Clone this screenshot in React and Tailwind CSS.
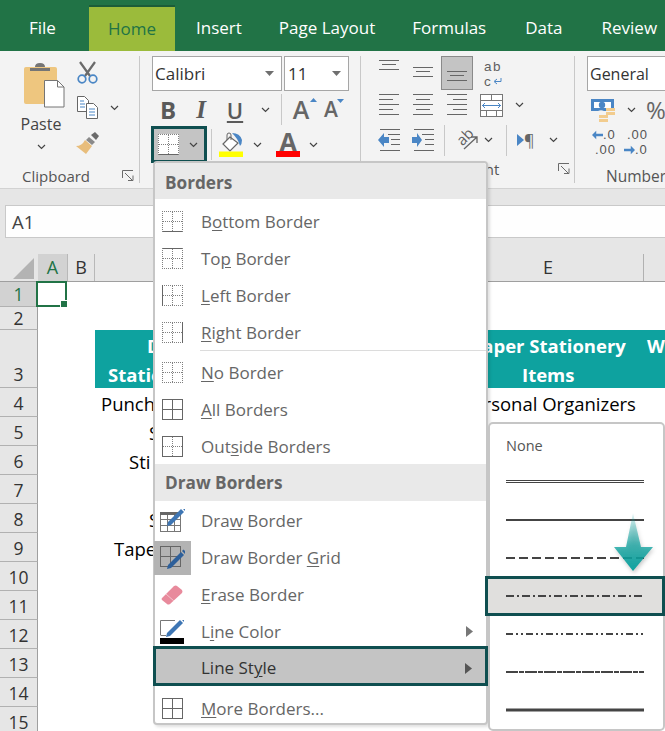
const Chev = ({ className = '' }) => (
  <svg width="9" height="6" viewBox="0 0 9 6" className={`shrink-0 ${className}`}>
    <path d="M1 1l3.5 3.5L8 1" fill="none" stroke="#444" strokeWidth="1.2" />
  </svg>
)

function Caret() {
  return (
    <svg width="9" height="5" viewBox="0 0 9 5" className="shrink-0">
      <path d="M0 0h9L4.5 5z" fill="#6f6f6f" />
    </svg>
  )
}

function Launcher() {
  return (
    <svg width="12" height="12" viewBox="0 0 12 12" className="shrink-0">
      <path d="M.5 8V.5H11M3 3l7 7M6 10.5h5v-5" fill="none" stroke="#6a6a6a" />
    </svg>
  )
}

function VSep({ className = '' }) {
  return <div className={`w-px bg-[#c8c8c8] shrink-0 ${className}`} />
}

// lines is a list of [x1, x2, y]
function Lines({ lines, w = 20, h = 22 }) {
  return (
    <svg width={w} height={h} viewBox={`0 0 ${w} ${h}`} className="shrink-0">
      {lines.map((l, i) => (
        <path key={i} d={`M${l[0]} ${l[2] + 0.5}H${l[1]}`} stroke="#666" strokeWidth="1" />
      ))}
    </svg>
  )
}

function BorderIcon({ solid = [], filled }) {
  const dot = { stroke: '#808080', strokeDasharray: '1 1', fill: 'none' }
  const line = { stroke: '#666', fill: 'none' }
  const has = (s) => solid.includes(s)
  const all = solid.includes('grid')
  const outer = all || solid.includes('outer')
  return (
    <svg width="21" height="21" viewBox="0 0 21 21" className="shrink-0" shapeRendering="crispEdges">
      {filled && <rect width="21" height="21" fill="#fff" />}
      <path d="M0 .5H21" {...(outer || has('top') ? line : dot)} />
      <path d="M0 20.500H21" {...(outer || has('bottom') ? line : dot)} />
      <path d="M.5 0V21" {...(outer || has('left') ? line : dot)} />
      <path d="M20.500 0V21" {...(outer || has('right') ? line : dot)} />
      <path d="M10.500 1V20M1 10.500H20" {...(all ? line : dot)} />
    </svg>
  )
}

function PasteIcon() {
  return (
    <svg width="41" height="46" viewBox="0 0 41 46" className="shrink-0">
      <rect y="5" width="33" height="37" rx="2" fill="#eec67f" />
      <path d="M6 6h20V9H6zM11 5q0-4 5-4t5 4z" fill="#757575" />
      <path d="M20.5 18.5h13l6.5 6.5v20H20.5z" fill="#fff" stroke="#757575" />
      <path d="M33.5 18.5v6.500H40" fill="none" stroke="#757575" />
    </svg>
  )
}

function ScissorsIcon() {
  return (
    <svg width="21" height="23" viewBox="0 0 21 23" className="shrink-0">
      <path d="M3 1l10 14M18 1L8 15" stroke="#6a6a6a" strokeWidth="2.200" fill="none" />
      <circle cx="5" cy="18" r="3.800" fill="none" stroke="#4a86c5" strokeWidth="1.700" />
      <circle cx="16" cy="18" r="3.800" fill="none" stroke="#4a86c5" strokeWidth="1.700" />
    </svg>
  )
}

function CopyIcon() {
  return (
    <svg width="21" height="23" viewBox="0 0 21 23" className="shrink-0">
      <path d="M.5 .5h7l4 4v11H.5z" fill="#fff" stroke="#666" />
      <path d="M9.500 7.500h7l4 4v11h-11z" fill="#fff" stroke="#666" />
      <path d="M3 5h4M3 8h5M3 11h5" stroke="#4a86c5" />
      <path d="M12 13h6M12 16h6M12 19h6" stroke="#4a86c5" />
    </svg>
  )
}

function BrushIcon() {
  return (
    <svg width="24" height="22" viewBox="0 0 24 22" className="shrink-0">
      <path d="M15 3l4-3 4 4-3 4z" fill="#6a6a6a" />
      <path d="M13 5l6 5-3 3-6-5z" fill="#8a8a8a" />
      <path d="M9 8l7 6-6 8-10-8q6 0 9-6z" fill="#e8bd7b" />
    </svg>
  )
}

function FillIcon() {
  return (
    <svg width="25" height="25" viewBox="0 0 25 25" className="shrink-0">
      <path d="M11 5L4 12l7 7 8-8z" fill="#fff" stroke="#666" strokeWidth="1.200" />
      <path d="M8 8V3q0-2 2-2t2 2v5" fill="none" stroke="#666" />
      <path d="M13 1q8 0 10 7 0 4-2 6-1-4-3-7-2-3-5-6z" fill="#4a86c5" />
      <path d="M0 22.500h24" stroke="#ffff00" strokeWidth="6" />
    </svg>
  )
}

function ColorA() {
  return (
    <div className="flex flex-col items-center w-[24px] shrink-0">
      <span className="text-[25px] leading-[19px] font-bold text-[#666]">A</span>
      <div className="w-[24px] h-[6px] bg-[#ff0000]" />
    </div>
  )
}

function WrapIcon() {
  return (
    <div
      className="flex flex-col w-[20px] shrink-0 text-[#5f5f5f] text-[13.5px] leading-[15px]"
      style={{ fontFamily: '"Liberation Sans", sans-serif' }}
    >
      <span className="tracking-[1.5px]">ab</span>
      <div className="flex items-center">
        <span>c</span>
        <svg width="9" height="8" viewBox="0 0 9 8" className="ml-[2px]">
          <path d="M8 0v3.500H2M4 1L1 3.500 4 6" fill="none" stroke="#4a86c5" />
        </svg>
      </div>
    </div>
  )
}

function MergeIcon() {
  return (
    <svg width="23" height="23" viewBox="0 0 23 23" className="shrink-0" shapeRendering="crispEdges">
      <rect x=".5" y=".5" width="22" height="22" fill="#fff" stroke="#777" />
      <path d="M1 6.500H22M1 16.500H22M11.500 1V6M6.500 17V22M16.500 17V22" stroke="#777" />
      <path d="M3 11.500H20" stroke="#4a86c5" />
      <path d="M5 9l-2.500 2.500L5 14M18 9l2.500 2.500L18 14" fill="none" stroke="#4a86c5" />
    </svg>
  )
}

function IndentIcon({ flip }) {
  return (
    <svg width="23" height="22" viewBox="0 0 23 22" className="shrink-0">
      {flip ? (
        <path d="M0 8h5V4l5 7-5 7v-4H0z" fill="#4a86c5" />
      ) : (
        <path d="M11 8H6V4l-6 7 6 7v-4h5z" fill="#4a86c5" />
      )}
      <path d="M2 .5h20M10 5.500h12M13 10.500h9M13 15.500h9M2 21.500h20" stroke="#666" />
    </svg>
  )
}

function CashIcon() {
  return (
    <svg width="25" height="23" viewBox="0 0 25 23" className="shrink-0">
      <path d="M0 0h23v12H13a6 6 0 0 0-6 0v0H0z" fill="#4a86c5" />
      <path d="M3 3h17v6H3z" fill="#fff" />
      <circle cx="11" cy="6" r="3.200" fill="#4a86c5" />
      <path d="M15 9h9v3h-9zM15 13h9v3h-9zM8 16h9v3H8zM8 20h9v3H8z" fill="#f2cc8e" />
    </svg>
  )
}

// pen drawn from its nib (x, y) up and to the right
function Pen({ x, y, color = '#3e76b4' }) {
  return (
    <g transform={`translate(${x} ${y})`}>
      <path d="M0 0l1-4L14-17l3 3L4-1z" fill={color} />
      <path d="M15-18l1.500-1.500 3 3L18-15z" fill={color} />
    </g>
  )
}

function DrawIcon({ kind }) {
  if (kind === 'erase') {
    return (
      <svg width="23" height="22" viewBox="0 0 23 22" className="shrink-0">
        <path d="M1 14L13 2q2-1 3 0l5 4q1 2 0 3L9 20q-2 1-3 0l-5-4q-1-1 0-2z" fill="#e88a9c" />
        <path d="M5 10l8 7" stroke="#f4c4cc" strokeWidth="1" />
      </svg>
    )
  }
  if (kind === 'color') {
    return (
      <svg width="24" height="24" viewBox="0 0 24 24" className="shrink-0">
        <path d="M.5 15V.5H15M.5 15.500H6" fill="none" stroke="#777" />
        <Pen x={6} y={17} />
        <path d="M0 21H24" stroke="#000" strokeWidth="6" />
      </svg>
    )
  }
  if (kind === 'draw') {
    return (
      <svg width="25" height="23" viewBox="0 0 25 23" className="shrink-0">
        <path d="M.5 3.500h20v19H.5zM7.500 4V22M14.500 4V22M1 10.500H20M1 16.500H20" fill="#fff" stroke="#777" shapeRendering="crispEdges" />
        <path d="M0 3h21v3H0z" fill="#666" />
        <Pen x={7} y={17} />
      </svg>
    )
  }
  return (
    <svg width="25" height="24" viewBox="0 0 25 24" className="shrink-0">
      <path d="M.5 .5h20v20H.5zM10.500 1V20M1 10.500H20" fill="none" stroke="#666" shapeRendering="crispEdges" />
      <Pen x={7} y={23} color="#2d5f9a" />
    </svg>
  )
}

const borderItems = [
  { pre: 'B', u: 'o', post: 'ttom Border', solid: ['bottom'] },
  { pre: 'To', u: 'p', post: ' Border', solid: ['top'] },
  { pre: '', u: 'L', post: 'eft Border', solid: ['left'] },
  { pre: '', u: 'R', post: 'ight Border', solid: ['right'], sep: true },
  { pre: '', u: 'N', post: 'o Border', solid: [] },
  { pre: '', u: 'A', post: 'll Borders', solid: ['grid'] },
  { pre: 'Out', u: 's', post: 'ide Borders', solid: ['outer'] },
]

const rows = [
  { n: 1, h: 'h-[25px]' },
  { n: 2, h: 'h-[23px]' },
  { n: 3, h: 'h-[58px]' },
  { n: 4, h: 'h-[29px]', text: 'Punch', pad: 'pl-[6px]', right: 'Personal Organizers' },
  { n: 5, h: 'h-[29px]', text: 'S', pad: 'pl-[54px]' },
  { n: 6, h: 'h-[29px]', text: 'Sti', pad: 'pl-[34px]' },
  { n: 7, h: 'h-[29px]' },
  { n: 8, h: 'h-[29px]', text: 'S', pad: 'pl-[54px]' },
  { n: 9, h: 'h-[29px]', text: 'Tape', pad: 'pl-[19px]' },
  { n: 10, h: 'h-[29px]' },
  { n: 11, h: 'h-[29px]' },
  { n: 12, h: 'h-[29px]' },
  { n: 13, h: 'h-[29px]' },
  { n: 14, h: 'h-[29px]' },
  { n: 15, h: 'h-[29px]' },
]

function MenuItem({ pre, u, post, icon, className = '' }) {
  return (
    <div className={`flex items-center h-[37px] shrink-0 ${className}`}>
      <div className="w-[36px] -ml-[1px] flex justify-center">{icon}</div>
      <span className="ml-[11px] text-[17px] text-[#666] whitespace-pre">
        {pre}
        <u className="underline-offset-2">{u}</u>
        {post}
      </span>
    </div>
  )
}

function StyleLine({ dash, width = 2, double, active }) {
  return (
    <div
      className={
        active
          ? 'flex items-center h-[40px] shrink-0 -ml-[5px] -mr-[2px] -my-px pl-[18px] relative bg-[#e0dfdd] border-[3px] border-[#0f4f50]'
          : 'flex items-center h-[38px] shrink-0 pl-[16px]'
      }
    >
      <svg width="138" height="6" viewBox="0 0 138 6" className="shrink-0">
        {double ? (
          <path d="M0 1.500H138M0 3.500H138" stroke="#444" strokeWidth="1" />
        ) : (
          <path d="M0 3H138" stroke="#444" strokeWidth={width} strokeDasharray={dash} />
        )}
      </svg>
    </div>
  )
}

export default function App() {
  return (
    <div
      className="relative w-[665px] h-[731px] overflow-hidden bg-white text-[#333]"
      style={{ fontFamily: '"Open Sans", "Noto Sans", sans-serif' }}
    >
      {/* tabs */}
      <div className="flex items-end h-[51px] bg-[#217346] text-white text-[17px] whitespace-nowrap overflow-hidden">
        <div className="h-[46px] w-[89px] pl-[29px] flex items-center shrink-0">File</div>
        <div className="h-[46px] w-[86px] flex items-center justify-center bg-[#9bbb3b] border-t-[2px] border-[#1c5c38] text-[#217346] shrink-0">
          Home
        </div>
        <div className="h-[46px] pl-[21px] flex items-center shrink-0">Insert</div>
        <div className="h-[46px] pl-[37px] flex items-center shrink-0">Page Layout</div>
        <div className="h-[46px] pl-[37px] flex items-center shrink-0">Formulas</div>
        <div className="h-[46px] pl-[39px] flex items-center shrink-0">Data</div>
        <div className="h-[46px] pl-[39px] flex items-center shrink-0">Review</div>
      </div>

      {/* ribbon */}
      <div className="flex h-[138px] bg-[#f3f3f3] border-b border-[#d2d2d2] text-[#444]">
        <div className="w-[139px] shrink-0 flex flex-col">
          <div className="flex h-[112px]">
            <div className="w-[76px] ml-[6px] flex flex-col items-center pt-[11px]">
              <PasteIcon />
              <span className="text-[16px] leading-[22px] mt-[5px] mr-[6px]">Paste</span>
              <Chev className="mt-[9px] mr-[6px]" />
            </div>
            <div className="flex flex-col pt-[10px] ml-[-5px]">
              <ScissorsIcon />
              <div className="flex items-center mt-[12px]">
                <CopyIcon />
                <Chev className="ml-[12px]" />
              </div>
              <div className="mt-[13px] -ml-[1px]">
                <BrushIcon />
              </div>
            </div>
          </div>
          <div className="flex items-center pl-[22px] mt-[3px]">
            <span className="text-[15px] leading-[20px] text-[#555]">Clipboard</span>
            <div className="ml-[32px]">
              <Launcher />
            </div>
          </div>
        </div>
        <VSep className="my-[5px]" />

        <div className="w-[220px] shrink-0 flex flex-col pt-[5px] pl-[12px]">
          <div className="flex gap-[2px] h-[35px]">
            <div className="w-[130px] bg-white border border-[#a6a6a6] flex items-center justify-between pl-[2px] pr-[7px] text-[17px] text-[#333]">
              Calibri <Caret />
            </div>
            <div className="w-[65px] bg-white border border-[#a6a6a6] flex items-center justify-between pl-[3px] pr-[7px] text-[17px] text-[#333]">
              11 <Caret />
            </div>
          </div>
          <div className="flex items-center h-[33px] mt-[2px] text-[#5a5a5a]">
            <span className="w-[32px] text-center text-[24px] leading-none font-bold">B</span>
            <span className="w-[34px] text-center text-[25px] leading-none italic font-semibold" style={{ fontFamily: '"Liberation Serif", serif' }}>I</span>
            <span className="w-[34px] text-center text-[22px] leading-none font-semibold underline underline-offset-2">U</span>
            <Chev className="ml-[9px]" />
            <VSep className="ml-[11px] h-[31px]" />
            <span className="relative w-[26px] ml-[6px] text-[25px] leading-none font-semibold text-[#666] text-center">
              A
              <svg width="7" height="4" viewBox="0 0 7 4" className="absolute -right-[3px] top-[1px]"><path d="M3.500 0L7 4H0z" fill="#4a86c5" /></svg>
            </span>
            <span className="relative w-[20px] ml-[7px] text-[21px] leading-none font-semibold text-[#666] text-center">
              A
              <svg width="7" height="4" viewBox="0 0 7 4" className="absolute -right-[3px] top-0"><path d="M0 0h7L3.500 4z" fill="#4a86c5" /></svg>
            </span>
          </div>
          <div className="flex items-center h-[37px] -ml-[1px]">
            <div className="w-[56px] h-[37px] bg-[#c4c4c4] border-[3px] border-[#0f4f50] flex items-center pl-[4px]">
              <BorderIcon solid={['bottom']} filled />
              <Chev className="ml-[10px]" />
            </div>
            <VSep className="ml-[4px] h-[31px]" />
            <div className="ml-[7px]">
              <FillIcon />
            </div>
            <Chev className="ml-[9px]" />
            <div className="ml-[14px]">
              <ColorA />
            </div>
            <Chev className="ml-[9px]" />
          </div>
        </div>
        <VSep className="my-[5px]" />

        <div className="w-[213px] shrink-0 flex flex-col relative">
          <div className="flex items-start h-[38px] pt-[5px] pl-[18px]">
            <div className="mt-[4px]"><Lines lines={[[0, 20, 0], [3, 17, 4], [0, 20, 9]]} h={11} /></div>
            <div className="ml-[14px] mt-[11px]"><Lines lines={[[0, 20, 0], [3, 17, 4], [0, 20, 9]]} h={11} /></div>
            <div className="ml-[8px] w-[32px] h-[34px] bg-[#c4c4c4] border border-[#8a8a8a] flex items-end justify-center pb-[7px]">
              <Lines lines={[[0, 20, 0], [3, 17, 4], [0, 20, 9]]} h={11} />
            </div>
            <div className="ml-[11px] mt-[3px]"><WrapIcon /></div>
          </div>
          <div className="flex items-center h-[30px] mt-[1px] pl-[18px]">
            <Lines lines={[[0, 20, 0], [0, 14, 5], [0, 20, 10], [0, 14, 15], [0, 20, 20]]} />
            <div className="ml-[14px]"><Lines lines={[[0, 20, 0], [3, 17, 5], [0, 20, 10], [3, 17, 15], [0, 20, 20]]} /></div>
            <div className="ml-[14px]"><Lines lines={[[0, 20, 0], [6, 20, 5], [0, 20, 10], [6, 20, 15], [0, 20, 20]]} /></div>
            <div className="ml-[13px]"><MergeIcon /></div>
            <Chev className="ml-[12px]" />
          </div>
          <div className="flex items-center h-[36px] mt-[2px] pl-[17px]">
            <IndentIcon />
            <div className="ml-[11px]"><IndentIcon flip /></div>
            <VSep className="ml-[9px] h-[31px]" />
            <div className="relative ml-[11px] w-[22px] h-[22px] shrink-0">
              <span className="absolute left-0 top-0 text-[15px] leading-none text-[#5f5f5f] rotate-[-45deg]">ab</span>
              <svg width="22" height="22" viewBox="0 0 22 22" className="absolute left-0 top-0">
                <path d="M8 20L21 8M15 8h6v6" fill="none" stroke="#666" strokeWidth="1.300" />
              </svg>
            </div>
            <Chev className="ml-[6px]" />
            <VSep className="ml-[13px] h-[31px]" />
            <div className="flex items-center ml-[10px] w-[20px]">
              <svg width="7" height="12" viewBox="0 0 7 12" className="shrink-0"><path d="M0 0l7 6-7 6z" fill="#4a86c5" /></svg>
              <span className="text-[16px] leading-none text-[#666]">¶</span>
            </div>
            <Chev className="ml-[12px]" />
          </div>
          <div className="flex items-center mt-[1px]">
            <span className="ml-[67px] w-[134px] text-[15px] leading-[20px] text-[#555]">Alignment</span>
            <div className="-ml-[4px]"><Launcher /></div>
          </div>
        </div>
        <VSep className="my-[5px]" />

        <div className="flex-1 min-w-0 flex flex-col pt-[5px] pl-[12px] overflow-hidden">
          <div className="h-[35px] w-[100px] shrink-0 bg-white border border-[#a6a6a6] flex items-center pl-[2px] text-[16px] text-[#333]">
            General
          </div>
          <div className="flex items-center h-[28px] shrink-0 mt-[5px] pl-[4px]">
            <CashIcon />
            <Chev className="ml-[11px]" />
            <span className="ml-[10px] text-[24px] leading-none text-[#666]">%</span>
          </div>
          <div
            className="flex items-center shrink-0 mt-[3px] pl-[5px] text-[13px] leading-[15px] text-[#555] tracking-[1px]"
            style={{ fontFamily: '"Liberation Sans", sans-serif' }}
          >
            <div className="flex flex-col w-[32px]">
              <span className="flex items-center">
                <svg width="11" height="10" viewBox="0 0 13 10" className="shrink-0"><path d="M5 0L0 5l5 5V6.500h8v-3H5z" fill="#4a86c5" /></svg>
                .0
              </span>
              <span className="pl-[3px]">.00</span>
            </div>
            <div className="flex flex-col w-[24px]">
              <span className="pl-[3px]">.00</span>
              <span className="flex items-center">
                <svg width="11" height="10" viewBox="0 0 13 10" className="shrink-0"><path d="M8 0l5 5-5 5V6.500H0v-3h8z" fill="#4a86c5" /></svg>
                .0
              </span>
            </div>
          </div>
          <span className="mt-[9px] pl-[19px] text-[15.5px] leading-[20px] text-[#555] whitespace-nowrap">Number</span>
        </div>
      </div>

      {/* formula bar */}
      <div className="h-[16px] bg-[#e6e6e6]" />
      <div className="h-[33px] bg-[#e6e6e6] pl-[5px]">
        <div className="h-[33px] bg-[#fefefe] border-y border-l border-[#c9c9c9] flex items-center pl-[6px] text-[18.5px] text-[#444]">
          A1
        </div>
      </div>

      {/* column heads */}
      <div className="h-[16px] bg-[#e6e6e6]" />
      <div className="flex h-[28px] bg-[#e6e6e6] border-b border-[#9f9f9f] text-[18px] text-[#333]">
        <div className="w-[38px] relative">
          <svg width="21" height="21" viewBox="0 0 21 21" className="ml-[13px] mt-[4px]"><path d="M21 0v21H0z" fill="#b3b3b3" /></svg>
        </div>
        <div className="w-[29px] flex items-center justify-center bg-[#d2d2d2] text-[#217346]">A</div>
        <div className="w-[28px] flex items-center justify-center border-x border-[#b8b8b8]">B</div>
        <div className="w-[358px]" />
        <div className="w-[191px] flex items-center justify-center border-r border-[#b1b1b1]">E</div>
      </div>

      {/* sheet */}
      {rows.map((r) => (
        <div key={r.n} className={`flex ${r.h} text-[18.500px] text-black`}>
          <div
            className={`w-[38px] shrink-0 flex justify-center border-r border-b border-r-[#9f9f9f] border-b-[#b1b1b1] text-[17.5px] ${
              r.n === 1 ? 'bg-[#d2d2d2] text-[#217346]' : 'bg-[#e6e6e6] text-[#333]'
            } ${r.n === 3 ? 'items-end' : 'items-center'} ${r.n > 3 ? 'pt-[3px]' : ''}`}
          >
            {r.n}
          </div>
          {r.n === 1 && (
            <div className="relative w-[31px] h-[26px] -ml-[2px] -mt-px border-2 border-[#217346]">
              <div className="absolute -right-[3px] -bottom-[3px] w-[6px] h-[6px] bg-[#217346] border border-white box-content" />
            </div>
          )}
          {r.n === 3 && (
            <div className="ml-[57px] flex-1 flex bg-[#0ea29f] text-white font-bold text-[18.5px] whitespace-nowrap overflow-hidden">
              <div className="w-[358px] flex flex-col pt-[1px] leading-[29px]">
                <span className="pl-[52px]">D</span>
                <span className="pl-[13px]">Statio</span>
              </div>
              <div className="w-[192px] flex flex-col items-center pt-[1px] leading-[29px] text-center">
                <span>Paper Stationery</span>
                <span>Items</span>
              </div>
              <div className="pl-[3px] pt-[1px] leading-[29px]">W</div>
            </div>
          )}
          {r.text && r.n !== 3 && (
            <div className="ml-[57px] flex-1 flex items-center pt-[3px]">
              <div className={`w-[358px] ${r.pad}`}>{r.text}</div>
              {r.right && <div className="w-[192px] text-center whitespace-nowrap">{r.right}</div>}
            </div>
          )}
        </div>
      ))}

      {/* borders menu */}
      <div className="absolute left-[153px] top-[161px] w-[335px] h-[564px] bg-white border-2 border-[#c6c6c6] rounded-[4px] flex flex-col shadow-[2px_2px_3px_rgba(0,0,0,0.12)]">
        <div className="h-[36px] bg-[#e9e9e9] flex items-center pl-[10px] pt-[3px] text-[17.2px] font-bold text-[#666] shrink-0 rounded-t-[3px]">
          Borders
        </div>
        <div className="h-[4px] shrink-0" />
        {borderItems.map((it) => (
          <div key={it.post + it.u} className="shrink-0 flex flex-col">
            <MenuItem pre={it.pre} u={it.u} post={it.post} icon={<BorderIcon solid={it.solid} />} />
            {it.sep && <div className="h-px bg-[#dcdcdc] ml-[45px] mt-[-1px] mb-[3px]" />}
          </div>
        ))}
        <div className="h-[37px] mt-[-1px] bg-[#e9e9e9] flex items-center pl-[10px] text-[17.2px] font-bold text-[#666] shrink-0">
          Draw Borders
        </div>
        <MenuItem pre="Dra" u="w" post=" Border" icon={<DrawIcon kind="draw" />} className="mt-px" />
        <div className="flex items-center h-[37px] shrink-0">
          <div className="w-[37px] h-[34px] -ml-[1px] bg-[#b3b3b3] flex items-center justify-center">
            <DrawIcon kind="grid" />
          </div>
          <span className="ml-[10px] text-[17px] text-[#666] whitespace-pre">
            Draw Border <u className="underline-offset-2">G</u>rid
          </span>
        </div>
        <MenuItem pre="" u="E" post="rase Border" icon={<DrawIcon kind="erase" />} />
        <div className="flex items-center shrink-0 h-[37px] pr-[13px]">
          <div className="w-[36px] -ml-[1px] flex justify-center"><DrawIcon kind="color" /></div>
          <span className="ml-[11px] flex-1 text-[17px] text-[#666] whitespace-pre">
            L<u className="underline-offset-2">i</u>ne Color
          </span>
          <svg width="7" height="11" viewBox="0 0 7 11"><path d="M0 0l7 5.500-7 5.500z" fill="#777" /></svg>
        </div>
        <div className="flex items-center shrink-0 h-[40px] -mx-[2px] -mt-[4px] pl-[45px] pr-[13px] pt-[4px] relative bg-[#c4c4c4] border-[3px] border-[#0f4f50]">
          <span className="flex-1 text-[17px] text-[#333] whitespace-pre">
            Line St<u className="underline-offset-2">y</u>le
          </span>
          <svg width="7" height="11" viewBox="0 0 7 11"><path d="M0 0l7 5.500-7 5.500z" fill="#555" /></svg>
        </div>
        <div className="h-[4px] shrink-0" />
        <MenuItem pre="" u="M" post="ore Borders..." icon={<BorderIcon solid={['grid']} />} />
      </div>

      {/* line style submenu */}
      <div className="absolute left-[488px] top-[422px] w-[177px] h-[309px] bg-white border-2 border-[#c6c6c6] rounded-[5px] flex flex-col pt-[4px]">
        <div className="h-[35px] flex items-center pl-[16px] text-[14.500px] text-[#555] shrink-0">None</div>
        <StyleLine double />
        <StyleLine />
        <StyleLine dash="9 4" />
        <StyleLine active dash="8 3 2 3" />
        <StyleLine dash="7 3 2 3 2 3" />
        <StyleLine dash="12 1 5 1" />
        <StyleLine width={3} />
      </div>

      {/* callout arrow */}
      <svg
        width="42"
        height="62"
        viewBox="0 0 42 62"
        className="absolute left-[612px] top-[512px]"
        style={{ filter: 'drop-shadow(1px 2px 2px rgba(0,0,0,0.25))' }}
      >
        <defs>
          <linearGradient id="arrowFill" x1="0" y1="0" x2="0" y2="1">
            <stop offset="0" stopColor="#0ea29f" stopOpacity="0.1" />
            <stop offset="0.55" stopColor="#0ea29f" stopOpacity="0.75" />
            <stop offset="1" stopColor="#0ea29f" />
          </linearGradient>
        </defs>
        <path d="M21 1l8 34h12L21 59 2 35h12z" fill="url(#arrowFill)" />
      </svg>
    </div>
  )
}
